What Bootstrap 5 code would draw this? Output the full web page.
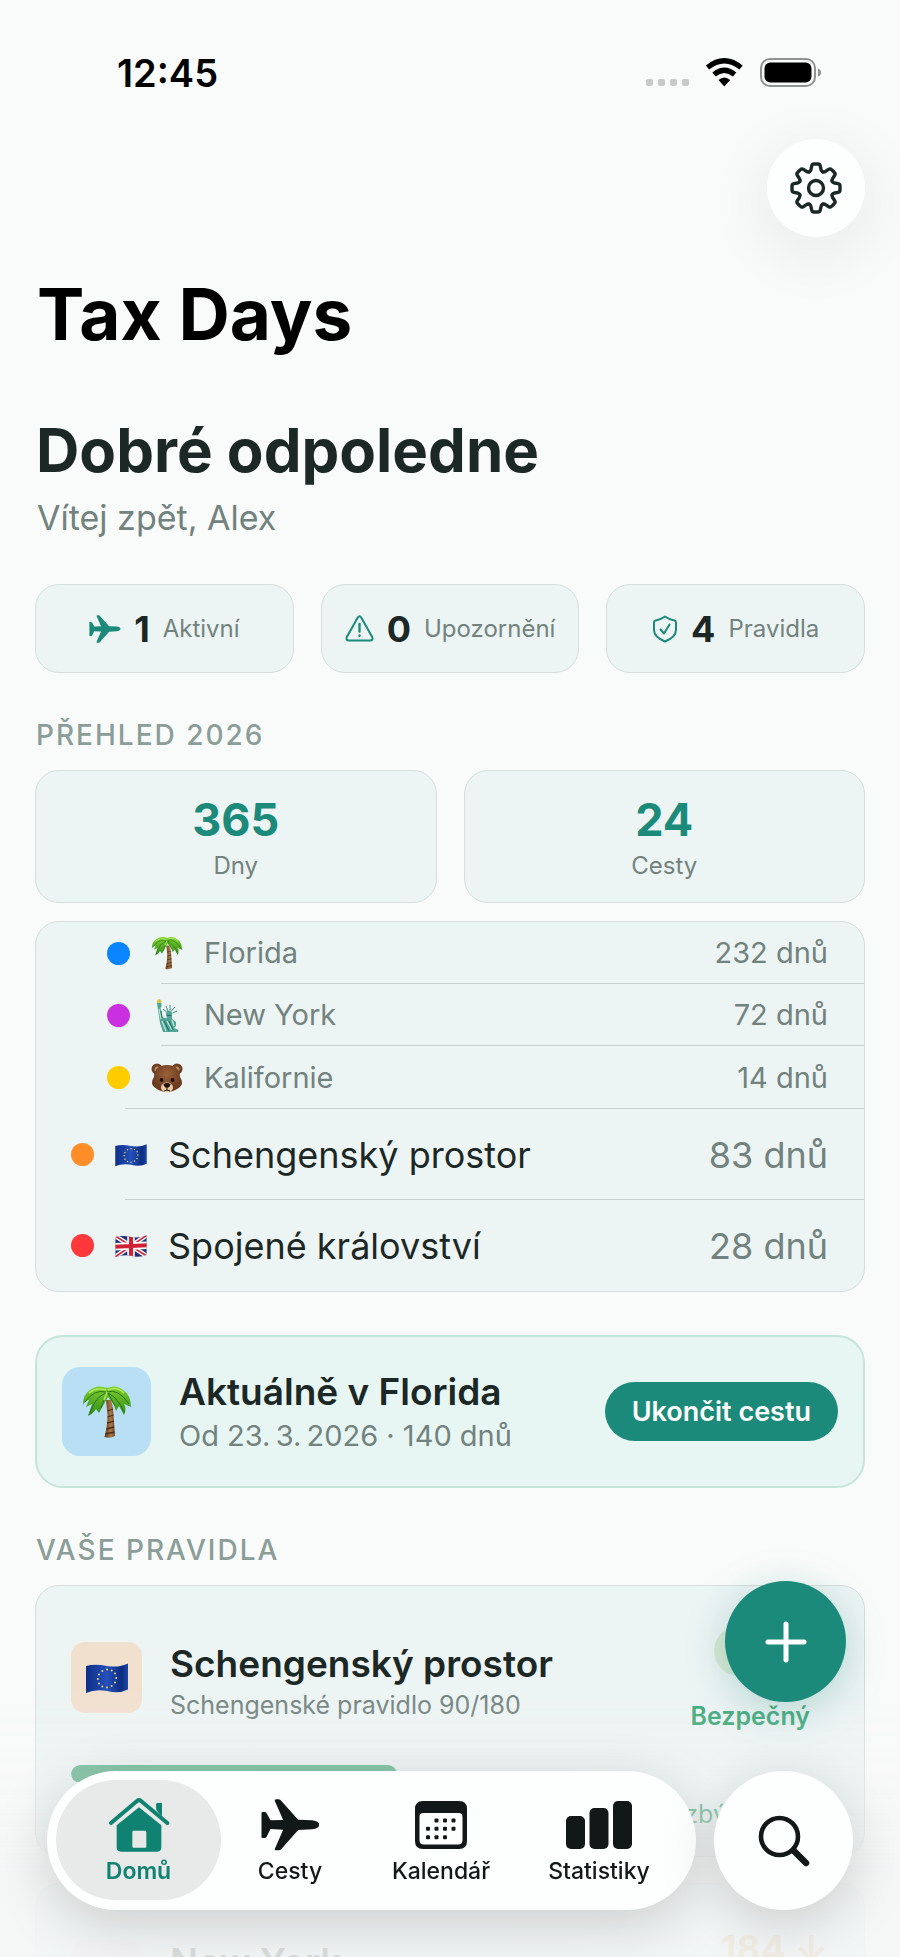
<!DOCTYPE html>
<html lang="cs">
<head>
<meta charset="utf-8">
<meta name="viewport" content="width=device-width, initial-scale=1">
<title>Tax Days</title>
<link href="https://cdn.jsdelivr.net/npm/bootstrap@5.3.0/dist/css/bootstrap.min.css" rel="stylesheet">
<style>
  :root { --ink:#1c2826; --dim:#72827e; --faint:#8a9d98; --brand:#1b8a7a; --surface:#edf4f4; --line:#d5dfdd; --rule:#c6d0ce; }
  body { font-family:Inter,"Liberation Sans",sans-serif; background:#f9fbfa; color:var(--ink); }
  svg { display:block; flex:none; }
  .screen { padding:0 35px; }
  .status { padding:46px 43px 0 82px; color:#000; }
  .clock { font-size:38px; line-height:54px; font-weight:600; }
  .settings { width:98px; height:98px; margin-top:39px; background:#fdffff; box-shadow:0 14px 60px 10px rgba(0,0,0,.06); color:var(--ink); }
  .app-title { font-size:71px; line-height:90px; font-weight:700; color:#000; margin:32px 0 0 2px; }
  .greeting { font-size:60px; line-height:72px; font-weight:700; margin:55px 0 0 1px; }
  .welcome { font-size:34px; line-height:44px; color:var(--dim); margin:10px 0 44px 2px; }
  .gap-tile { gap:27px; }
  .tile { background:var(--surface); border:1px solid var(--line); border-radius:24px; flex:1 1 0; min-width:0; }
  .stat { height:89px; gap:13px; }
  .stat svg { color:var(--brand); }
  .stat-num { font-size:36px; line-height:44px; font-weight:700; }
  .t-s { font-size:25px; line-height:30px; color:var(--dim); }
  .stat .t-s, .total .t-s { font-size:24px; }
  .t-m { font-size:29px; line-height:36px; color:var(--dim); }
  .t-l { font-size:36px; line-height:44px; }
  .section-head { font-size:28px; line-height:36px; font-weight:500; letter-spacing:2px; color:var(--faint); margin:44px 0 17px 1px; }
  .total { padding:26px 0 21px; }
  .total-num { font-size:45px; line-height:46px; font-weight:700; color:var(--brand); margin-bottom:8px; }
  .places { background:var(--surface); border:1px solid var(--line); border-radius:24px; margin-top:18px; }
  .place { height:91px; padding:0 36px 0 35px; background:linear-gradient(var(--rule),var(--rule)) no-repeat right bottom / calc(100% - 89px) 1px; }
  .place:last-child { background:none; }
  .place.sub { height:62px; padding-left:71px; background-size:calc(100% - 125px) 1px; }
  .place.sub.last-sub { height:63px; background-size:calc(100% - 89px) 1px; }
  .dot { width:23px; height:23px; border-radius:50%; flex:none; }
  .emoji { width:34px; margin:0 20px 0 20px; }
  .dim { color:var(--dim); }
  .trip { background:#e7f6f3; border:2px solid #c5e4da; border-radius:28px; padding:30px 25px; margin-top:43px; }
  .thumb { border-radius:18px; flex:none; }
  .thumb-l { width:89px; height:89px; background:#b9dff5; margin-right:28px; }
  .thumb-m { width:71px; height:71px; background:#f2e0cf; border-radius:14px; margin-right:28px; }
  .name { font-size:37px; font-weight:600; }
  .end-trip { background:var(--brand); color:#fff; font-size:27px; line-height:31px; font-weight:600; border:0; padding:14px 27px; border-radius:30px; }
  .end-trip:hover { background:#15705f; color:#fff; }
  .rulebox { background:var(--surface); border:1px solid var(--line); border-radius:24px; padding:40px 36px 32px 35px; height:272px; }
  .rulebox + .rulebox { margin-top:26px; }
  .score { color:#e0a860; background:#d9e8d4; border-radius:25px; font-size:37px; line-height:50px; font-weight:700; padding:0 33px; }
  .score.bare { background:none; }
  .state { color:#3ca677; font-weight:600; margin:25px 18px 0 0; }
  .progress.meter { height:18px; border-radius:9px; background:none; margin-top:34px; --bs-progress-bar-bg:#5cb288; }
  .meter .progress-bar { border-radius:9px; }
  .fade-out { height:270px; pointer-events:none; background:linear-gradient(rgba(244,246,246,0),rgba(244,246,246,.45) 45%,rgba(244,246,246,.88) 68%); }
  .dock { padding:0 47px 47px; gap:18px; }
  .bar-shell, .find { height:139px; background:#fcfffe; box-shadow:0 14px 56px rgba(0,0,0,.17); }
  .bar-shell { border-radius:70px; padding:9px 21px 10px 9px; }
  .tab { color:#121817; font-size:23px; line-height:28px; font-weight:500; border-radius:60px; text-decoration:none; flex:1 1 0; padding:17px 0 0; }
  .tab .pic { height:56px; margin-bottom:4px; }
  .tab:nth-child(1) { flex-grow:165; } .tab:nth-child(2) { flex-grow:138; }
  .tab:nth-child(3) { flex-grow:164; } .tab:nth-child(4) { flex-grow:152; }
  .tab.active { background:#e7eae9; color:#0f8271; font-weight:600; }
  .find { width:139px; flex:none; color:#121817; }
  .fab { width:121px; height:121px; right:54px; bottom:255px; background:var(--brand); color:#fff; z-index:1031; box-shadow:0 8px 40px rgba(27,138,122,.28); }
</style>
</head>
<body>
<svg width="0" height="0" class="position-absolute" aria-hidden="true">
  <defs>
    <linearGradient id="bark" x2="1"><stop stop-color="#5f3a1e"/><stop offset=".6" stop-color="#a9794a"/><stop offset="1" stop-color="#6d4526"/></linearGradient>
    <linearGradient id="leaf" y2="1" x2="0"><stop stop-color="#7fd02c"/><stop offset="1" stop-color="#2f8a1c"/></linearGradient>
    <radialGradient id="fur" cy=".35"><stop stop-color="#9c6239"/><stop offset="1" stop-color="#6b3d20"/></radialGradient>
    <linearGradient id="blue" x2="1"><stop stop-color="#0d2f86"/><stop offset=".5" stop-color="#2450bb"/><stop offset=".85" stop-color="#0b2c80"/><stop offset="1" stop-color="#1c46a8"/></linearGradient>
    <symbol id="palm" viewBox="0 0 50 54">
      <path d="M24 15 29 15Q31 21 31.500 29L33 51Q28 54 22.500 52Q25.500 40 25.500 30Z" fill="url(#bark)"/>
      <path d="M25.500 26 31 24M25.500 32 31.500 30M25 38 32 36M24.500 44 32 42M23.500 49 32.500 47" stroke="#4d2c14" stroke-width="1.300"/>
      <path d="M25 3Q15-1 8 5Q1 9 1 20Q4 15 7 15L4 22Q8 20 10 19L6 31Q11 29 14 24L17 28L22 19L26 12L32 20L34 26L37 21L42 30Q45 24 42 19L49 22Q49 10 41 5Q34-1 25 3Z" fill="url(#leaf)"/>
      <path d="M24 7Q12 4 3 17M24 8Q13 12 8 28M25 7Q36 3 47 19M26 8Q36 13 42 27M25 7 19 23M26 8 33 21" stroke="#2a7418" stroke-width="1" fill="none"/>
      <path d="M24 5Q14 2 7 8M26 5Q35 1 42 8M25 7 22 15" stroke="#aeea5c" stroke-width="1.500" fill="none"/>
    </symbol>
    <symbol id="statue" viewBox="0 0 34 36">
      <path d="M7 4Q9 0 11.500 4L11 6H7.500Z" fill="#d8c33a"/>
      <path d="M7 6H11.500L11.500 9 10.500 11 12.500 20Q15 22 17 21L16 18Q15.500 14 19 13.500Q23 14 22 19L22 22 26 25 26 29 24 31 28.500 33 28 35H13L10 26 8 13Z" fill="#4fa596"/>
      <path d="M16.500 15 13 12M18 14 16 9M20 13.500 20 8M21.500 14 25 10M22.500 16 27 14" stroke="#3d9485" stroke-width="1"/>
      <path d="M12 24 16 34M17 24 22 33M22 23 24 29M9 12 11 22" stroke="#bfe6da" stroke-width="1.300"/>
      <path d="M14 24 19 34M19 24 23 33M17 18.500H21M11 14 12 21" stroke="#206a60" stroke-width="1"/>
    </symbol>
    <symbol id="bear" viewBox="0 0 34 34">
      <circle cx="7" cy="8" r="5.500" fill="#6f4023"/><circle cx="27" cy="8" r="5.500" fill="#6f4023"/>
      <circle cx="7.500" cy="8.500" r="3" fill="#b98a66"/><circle cx="26.500" cy="8.500" r="3" fill="#b98a66"/>
      <path d="M17 4C26 4 30 9 30 16Q34 22 30 26Q24 31 17 31Q10 31 4 26Q0 22 4 16C4 9 8 4 17 4Z" fill="url(#fur)"/>
      <ellipse cx="17" cy="26.500" rx="6" ry="5" fill="#e8c9a0"/>
      <path d="M13.500 23Q17 21 20.500 23Q20 26.500 17 27Q14 26.500 13.500 23Z" fill="#1d120c"/>
      <path d="M17 27V29M14 30Q17 28 20 30" stroke="#1d120c" stroke-width="1" fill="none"/>
      <circle cx="11.500" cy="19" r="1.900" fill="#1a0f09"/><circle cx="22.500" cy="19" r="1.900" fill="#1a0f09"/>
    </symbol>
    <symbol id="eu" viewBox="0 0 44 32">
      <path d="M1 4Q10 1.500 22 4Q34 6 43 1.500V27.500Q34 32 22 29Q10 27 1 31Z" fill="url(#blue)"/>
      <g fill="#f0d468"><circle cx="22" cy="7.500" r="1"/><circle cx="26.700" cy="8.500" r="1"/><circle cx="30" cy="11.500" r="1"/><circle cx="31.200" cy="16" r="1"/><circle cx="30" cy="20.500" r="1"/><circle cx="26.700" cy="24" r="1"/><circle cx="22" cy="25.500" r="1"/><circle cx="17.300" cy="24.500" r="1"/><circle cx="14" cy="21.500" r="1"/><circle cx="12.800" cy="17" r="1"/><circle cx="14" cy="12.500" r="1"/><circle cx="17.300" cy="8.900" r="1"/></g>
    </symbol>
    <clipPath id="wave"><path d="M1 4Q10 1.500 22 4Q34 6 43 1.500V27.500Q34 32 22 29Q10 27 1 31Z"/></clipPath>
    <symbol id="uk" viewBox="0 0 44 32">
      <g clip-path="url(#wave)"><path fill="#1e2f74" d="M0 0H44V32H0Z"/>
      <path d="M0 2 44 30M0 31 44 1" stroke="#fff" stroke-width="6"/><path d="M0 2 44 30M0 31 44 1" stroke="#cf2036" stroke-width="2.200"/>
      <path d="M22 0V32M0 17 22 16 44 15" stroke="#fff" stroke-width="10" fill="none"/><path d="M22 0V32M0 17 22 16 44 15" stroke="#cf2036" stroke-width="5.500" fill="none"/></g>
    </symbol>
    <symbol id="plane" viewBox="12 6 176 156">
      <path fill="currentColor" d="M13 47Q13 45 16 45H23Q26 45 28 48L40 70 78 69 53 12Q51 7 57 7L65 7Q69 8 72 11L123 68 165 70Q186 73 186 83Q186 94 165 97L123 99 72 157Q69 160 65 160L57 160Q51 160 53 155L78 98 40 96 28 120Q26 123 23 123H16Q13 123 13 121Z"/>
    </symbol>
    <path id="tooth" d="M-6.700-16.200Q-5.300-16.800-5-18.500L-4.300-22Q-3.900-24-2-24H2Q3.900-24 4.300-22L5-18.500Q5.300-16.800 6.700-16.200"/>
  </defs>
</svg>

<div class="vh-100 overflow-hidden">
  <div class="screen">
    <header>
      <div class="status d-flex align-items-center justify-content-between">
        <time class="clock">12:45</time>
        <svg width="176" height="30" viewBox="0 0 176 30" aria-hidden="true">
          <g fill="#c6c9c8"><rect y="21" width="7" height="7" rx="2"/><rect x="12" y="21" width="7" height="7" rx="2"/><rect x="24" y="21" width="7" height="7" rx="2"/><rect x="36" y="21" width="7" height="7" rx="2"/></g>
          <g fill="none" stroke="#000" stroke-width="5.200"><path d="M61.500 9.500Q78.300-4 95.100 9.500"/><path d="M68 16.500Q78.300 8 88.600 16.500"/></g>
          <path d="M72.500 22Q78.300 17 84.100 22L78.300 28.500Z"/>
          <rect x="115" y="1" width="54" height="27" rx="9" fill="none" stroke="#8f9291" stroke-width="2"/>
          <rect x="118.500" y="4.500" width="47" height="20" rx="6"/>
          <path d="M172 10.500Q175 11.500 175 14.500T172 18.500Z" fill="#8f9291"/>
        </svg>
      </div>
      <div class="d-flex justify-content-end">
        <button type="button" class="settings btn rounded-circle p-0 border-0 d-flex align-items-center justify-content-center" aria-label="Nastavení">
          <svg width="54" height="54" viewBox="-27 -27 54 54" fill="none" stroke="currentColor" stroke-width="3.400" stroke-linecap="round">
            <use href="#tooth"/><use href="#tooth" transform="rotate(45)"/><use href="#tooth" transform="rotate(90)"/><use href="#tooth" transform="rotate(135)"/><use href="#tooth" transform="rotate(180)"/><use href="#tooth" transform="rotate(225)"/><use href="#tooth" transform="rotate(270)"/><use href="#tooth" transform="rotate(315)"/>
            <circle r="7.500"/>
          </svg>
        </button>
      </div>
      <h1 class="app-title">Tax Days</h1>
    </header>

    <main>
      <h2 class="greeting">Dobré odpoledne</h2>
      <p class="welcome">Vítej zpět, Alex</p>

      <div class="d-flex gap-tile">
        <div class="tile stat d-flex align-items-center justify-content-center">
          <svg width="32" height="28"><use href="#plane"/></svg>
          <span class="stat-num">1</span><span class="t-s">Aktivní</span>
        </div>
        <div class="tile stat d-flex align-items-center justify-content-center">
          <svg width="29" height="27" viewBox="0 0 29 27" fill="none" stroke="currentColor" stroke-width="2" stroke-linecap="round" stroke-linejoin="round"><path d="M12.800 2.500Q14.500 0 16.200 2.500L27.200 22Q28.500 25.500 25 25.500H4Q.5 25.500 1.800 22Z"/><path d="M14.500 9V16.500M14.500 20.500V20.700" stroke-width="2.400"/></svg>
          <span class="stat-num">0</span><span class="t-s">Upozornění</span>
        </div>
        <div class="tile stat d-flex align-items-center justify-content-center">
          <svg width="26" height="28" viewBox="0 0 26 28" fill="none" stroke="currentColor" stroke-width="2" stroke-linecap="round" stroke-linejoin="round"><path d="M13 1.500Q17 4.500 22.500 5.500Q24 5.800 24 7.500V15Q24 22 13 26.500Q2 22 2 15V7.500Q2 5.800 3.500 5.500Q9 4.500 13 1.500Z"/><path d="M8.500 14.500 12 18.500 17.500 9.500"/></svg>
          <span class="stat-num">4</span><span class="t-s">Pravidla</span>
        </div>
      </div>

      <h3 class="section-head">PŘEHLED 2026</h3>
      <div class="d-flex gap-tile">
        <div class="tile total text-center"><div class="total-num">365</div><div class="t-s">Dny</div></div>
        <div class="tile total text-center"><div class="total-num">24</div><div class="t-s">Cesty</div></div>
      </div>

      <ul class="places list-unstyled mb-0">
        <li class="place sub d-flex align-items-center t-m"><span class="dot" style="background:#0a84ff"></span><svg class="emoji" height="34"><use href="#palm"/></svg><span>Florida</span><span class="ms-auto">232 dnů</span></li>
        <li class="place sub d-flex align-items-center t-m"><span class="dot" style="background:#cb30e0"></span><svg class="emoji" height="36"><use href="#statue"/></svg><span>New York</span><span class="ms-auto">72 dnů</span></li>
        <li class="place sub last-sub d-flex align-items-center t-m"><span class="dot" style="background:#ffcc00"></span><svg class="emoji" height="34"><use href="#bear"/></svg><span>Kalifornie</span><span class="ms-auto">14 dnů</span></li>
        <li class="place d-flex align-items-center t-l"><span class="dot" style="background:#ff8d28"></span><svg class="emoji" height="24"><use href="#eu"/></svg><span>Schengenský prostor</span><span class="ms-auto dim">83 dnů</span></li>
        <li class="place d-flex align-items-center t-l"><span class="dot" style="background:#ff383c"></span><svg class="emoji" height="24"><use href="#uk"/></svg><span>Spojené království</span><span class="ms-auto dim">28 dnů</span></li>
      </ul>

      <section class="trip d-flex align-items-center">
        <div class="thumb thumb-l d-flex align-items-center justify-content-center"><svg width="50" height="54"><use href="#palm"/></svg></div>
        <div>
          <div class="t-l name">Aktuálně v Florida</div>
          <div class="t-m mt-1">Od 23.&#8201;3.&#8201;2026 · 140 dnů</div>
        </div>
        <button type="button" class="btn end-trip ms-auto">Ukončit cestu</button>
      </section>

      <h3 class="section-head">VAŠE PRAVIDLA</h3>
      <article class="rulebox">
        <div class="d-flex">
          <div class="thumb thumb-m d-flex align-items-center justify-content-center mt-3"><svg width="44" height="32"><use href="#eu"/></svg></div>
          <div class="pt-3">
            <div class="t-l name">Schengenský prostor</div>
            <div class="t-s mt-1">Schengenské pravidlo 90/180</div>
          </div>
          <div class="ms-auto d-flex flex-column align-items-end">
            <div class="score">83</div>
            <div class="t-s state">Bezpečný</div>
          </div>
        </div>
        <div class="progress meter" role="progressbar" aria-label="Vyčerpané dny" aria-valuenow="43" aria-valuemin="0" aria-valuemax="100"><div class="progress-bar" style="width:43%"></div></div>
        <div class="text-end t-s state me-0 mt-3 fw-normal">zbývá 7 dnů</div>
      </article>
      <article class="rulebox">
        <div class="d-flex">
          <div class="thumb thumb-m mt-3" style="background:#eed9f3"></div>
          <div class="pt-3 t-l name">New York</div>
          <div class="ms-auto score bare pe-0">184 ↓</div>
        </div>
      </article>
    </main>
  </div>
</div>

<div class="fade-out fixed-bottom"></div>
<button type="button" class="fab btn rounded-circle position-fixed p-0 border-0 d-flex align-items-center justify-content-center" aria-label="Přidat cestu">
  <svg width="42" height="42" viewBox="0 0 42 42" stroke="currentColor" stroke-width="5" stroke-linecap="round"><path d="M21 3V39M3 21H39"/></svg>
</button>
<div class="dock fixed-bottom d-flex">
  <nav class="bar-shell d-flex flex-grow-1" aria-label="Hlavní navigace">
    <a href="#domu" class="tab active d-flex flex-column align-items-center" aria-current="page">
      <span class="pic d-flex align-items-center"><svg width="62" height="56" viewBox="140 81 186 168"><g fill="currentColor"><path d="M285 128V103Q285 99 289 99H298Q302 99 302 103V144Z"/><path d="M233 112 300 166V232Q300 245 287 245H179Q166 245 166 232V166ZM213 186V230Q213 233 216 233H252Q255 233 255 230V186Q255 182 251 182H217Q213 182 213 186Z" fill-rule="evenodd"/></g><path d="M149 159 227 93Q233 88 239 93L318 159" fill="none" stroke="#e7eae9" stroke-width="26"/><path d="M285 120V103Q285 99 289 99H298Q302 99 302 103V140Z" fill="currentColor"/><path d="M149 159 227 93Q233 88 239 93L318 159" fill="none" stroke="currentColor" stroke-width="12" stroke-linecap="round"/></svg></span>
      Domů
    </a>
    <a href="#cesty" class="tab d-flex flex-column align-items-center">
      <span class="pic d-flex align-items-center"><svg width="59" height="52"><use href="#plane"/></svg></span>
      Cesty
    </a>
    <a href="#kalendar" class="tab d-flex flex-column align-items-center">
      <span class="pic d-flex align-items-center"><svg width="52" height="48" viewBox="0 0 52 48" fill="currentColor"><path fill-rule="evenodd" d="M8 0H44Q52 0 52 8V40Q52 48 44 48H8Q0 48 0 40V8Q0 0 8 0ZM8.500 12Q4.500 12 4.500 16V39Q4.500 43.500 9 43.500H43Q47.500 43.500 47.500 39V16Q47.500 12 43.500 12Z"/><g><rect x="19.500" y="17.500" width="4" height="4" rx="1"/><rect x="28" y="17.500" width="4" height="4" rx="1"/><rect x="36.500" y="17.500" width="4" height="4" rx="1"/><rect x="11" y="25.800" width="4" height="4" rx="1"/><rect x="19.500" y="25.800" width="4" height="4" rx="1"/><rect x="28" y="25.800" width="4" height="4" rx="1"/><rect x="36.500" y="25.800" width="4" height="4" rx="1"/><rect x="11" y="34.200" width="4" height="4" rx="1"/><rect x="19.500" y="34.200" width="4" height="4" rx="1"/><rect x="28" y="34.200" width="4" height="4" rx="1"/></g></svg></span>
      Kalendář
    </a>
    <a href="#statistiky" class="tab d-flex flex-column align-items-center">
      <span class="pic d-flex align-items-center"><svg width="66" height="48" viewBox="0 0 66 48" fill="currentColor"><rect y="15" width="19" height="33" rx="5"/><rect x="23.500" y="7" width="19" height="41" rx="5"/><rect x="47" width="19" height="48" rx="5"/></svg></span>
      Statistiky
    </a>
  </nav>
  <button type="button" class="find btn rounded-circle p-0 border-0 d-flex align-items-center justify-content-center" aria-label="Hledat">
    <svg width="52" height="52" viewBox="0 0 52 52" fill="none" stroke="currentColor" stroke-linecap="round"><circle cx="21.500" cy="21.500" r="18.500" stroke-width="4.600"/><path d="M36 36 48 48" stroke-width="6.500"/></svg>
  </button>
</div>
<script src="https://cdn.jsdelivr.net/npm/bootstrap@5.3.0/dist/js/bootstrap.bundle.min.js"></script>
</body>
</html>
